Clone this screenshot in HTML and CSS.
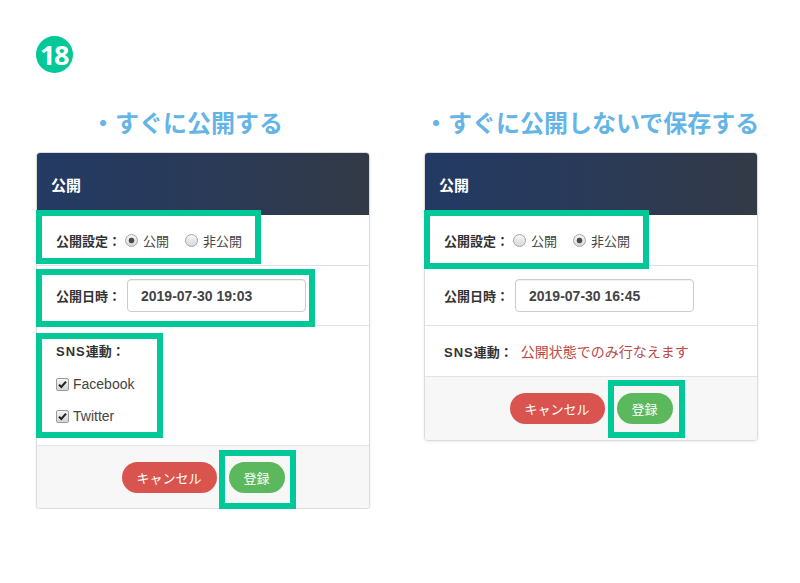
FILE: index.html
```html
<!DOCTYPE html>
<html lang="ja">
<head>
<meta charset="utf-8">
<title>公開設定</title>
<link rel="stylesheet" href="styles.css">
</head>
<body>
<div class="page">
  <div class="badge">18</div>
  <div class="columns">
    <section class="col">
      <h2 class="heading heading--left">・すぐに公開する</h2>
      <div class="card">
        <div class="card-header">公開</div>
        <div class="row row-radio">
          <span class="label">公開設定：</span>
          <span class="opt"><span class="radio radio--on"></span>公開</span>
          <span class="opt opt--second"><span class="radio"></span>非公開</span>
        </div>
        <div class="row row-date">
          <span class="label">公開日時：</span>
          <span class="date-input">2019-07-30 19:03</span>
        </div>
        <div class="row-sns-list">
          <div class="sns-title"><span class="wide">SNS</span>連動：</div>
          <div class="check-line"><span class="check"><svg width="11" height="11" viewBox="0 0 11 11"><path d="M2 5.6 L4.3 8 L9 2.6" fill="none" stroke="#222" stroke-width="2"/></svg></span>Facebook</div>
          <div class="check-line"><span class="check"><svg width="11" height="11" viewBox="0 0 11 11"><path d="M2 5.6 L4.3 8 L9 2.6" fill="none" stroke="#222" stroke-width="2"/></svg></span>Twitter</div>
        </div>
        <div class="card-footer">
          <span class="btn btn-cancel">キャンセル</span>
          <span class="btn btn-register">登録</span>
        </div>
        <div class="mark mark-l1"></div>
        <div class="mark mark-l2"></div>
        <div class="mark mark-l3"></div>
        <div class="mark mark-l4"></div>
      </div>
    </section>
    <section class="col">
      <h2 class="heading">・すぐに公開しないで保存する</h2>
      <div class="card">
        <div class="card-header">公開</div>
        <div class="row row-radio">
          <span class="label">公開設定：</span>
          <span class="opt"><span class="radio"></span>公開</span>
          <span class="opt opt--second"><span class="radio radio--on"></span>非公開</span>
        </div>
        <div class="row row-date">
          <span class="label">公開日時：</span>
          <span class="date-input">2019-07-30 16:45</span>
        </div>
        <div class="row row-sns-note">
          <span class="label"><span class="wide">SNS</span>連動：</span>
          <span class="note">公開状態でのみ行なえます</span>
        </div>
        <div class="card-footer card-footer--tall">
          <span class="btn btn-cancel">キャンセル</span>
          <span class="btn btn-register">登録</span>
        </div>
        <div class="mark mark-r1"></div>
        <div class="mark mark-r2"></div>
      </div>
    </section>
  </div>
</div>
</body>
</html>
```

FILE: styles.css
```css
* { box-sizing: border-box; }

body {
  margin: 0;
  background: #ffffff;
  font-family: "Liberation Sans", "Noto Sans CJK JP", sans-serif;
  color: #333;
}

.page {
  padding: 36px 0 0 36px;
}

.badge {
  width: 37px;
  height: 37px;
  border-radius: 50%;
  background: #00c896;
  color: #fff;
  font: 700 27px/37px "Open Sans", sans-serif;
  text-align: center;
  letter-spacing: -1.5px;
  text-indent: -1px;
}

.columns {
  display: flex;
  gap: 54px;
  margin-top: 33px;
  align-items: flex-start;
}

.col {
  width: 334px;
}

.heading {
  margin: 0 0 14px;
  font: 700 24px/32px "Noto Sans CJK JP", sans-serif;
  color: #64b5e6;
  white-space: nowrap;
}

.heading--left {
  padding-left: 55px;
}

.card {
  position: relative;
  border: 1px solid #dcdcdc;
  border-radius: 4px;
  background: #fff;
  box-shadow: 0 1px 3px rgba(0, 0, 0, 0.08);
}

.card-header {
  height: 62px;
  display: flex;
  align-items: center;
  padding-left: 14px;
  background: linear-gradient(90deg, #233a64 0%, #2a3a58 50%, #333a47 100%);
  color: #fff;
  font-weight: 700;
  font-size: 15px;
  border-radius: 3px 3px 0 0;
}

.row {
  display: flex;
  align-items: center;
  padding: 0 19px;
  border-bottom: 1px solid #e3e3e3;
  font-size: 13px;
}

.row-radio { height: 51px; }
.row-date { height: 60px; }
.row-sns-note { height: 51px; }

.label {
  font-weight: 700;
  color: #333;
  font-size: 13px;
}

.wide {
  letter-spacing: 1px;
}

.opt {
  display: inline-flex;
  align-items: center;
  gap: 5px;
  margin-left: 4px;
  color: #444;
  font-size: 13px;
}

.opt--second {
  margin-left: 16px;
}

.radio {
  width: 13px;
  height: 13px;
  border-radius: 50%;
  border: 1px solid #a6a6a6;
  background: linear-gradient(#f6f6f6, #d9d9d9);
}

.radio--on {
  background: radial-gradient(circle, #4a4a4a 0 2.5px, transparent 3.2px), linear-gradient(#f6f6f6, #d9d9d9);
}

.date-input {
  display: flex;
  align-items: center;
  margin-left: 6px;
  width: 179px;
  height: 33px;
  padding: 0 13px;
  border: 1px solid #cccccc;
  border-radius: 4px;
  font: 700 14px "Liberation Sans", sans-serif;
  color: #444;
  box-shadow: inset 0 1px 1px rgba(0, 0, 0, 0.06);
}

.row-sns-list {
  padding: 10px 19px 13px;
  border-bottom: 1px solid #e3e3e3;
}

.sns-title {
  line-height: 32px;
  font-weight: 700;
  font-size: 13px;
}

.check-line {
  display: flex;
  align-items: center;
  gap: 4px;
  height: 32px;
  font-size: 14px;
  color: #444;
}

.check {
  width: 13px;
  height: 13px;
  border: 1px solid #9a9a9a;
  border-radius: 2px;
  background: linear-gradient(#f4f4f4, #d6d6d6);
  display: flex;
  align-items: center;
  justify-content: center;
}

.note {
  margin-left: 8px;
  color: #b94a48;
  font-size: 14px;
}

.card-footer {
  display: flex;
  justify-content: center;
  gap: 12px;
  padding: 16px 0 15px;
  background: #f7f7f7;
  border-radius: 0 0 3px 3px;
}

.card-footer--tall {
  padding-bottom: 16px;
}

.btn {
  display: flex;
  align-items: center;
  justify-content: center;
  height: 31px;
  border-radius: 16px;
  color: #fff;
  font-size: 13px;
}

.btn-cancel {
  width: 95px;
  background: #d9534f;
}

.btn-register {
  width: 56px;
  background: #5cb85c;
}

.mark {
  position: absolute;
  border: 6px solid #00c896;
  pointer-events: none;
}

.mark-l1 { left: -1px; top: 57px; width: 225px; height: 54px; }
.mark-l2 { left: -1px; top: 116px; width: 279px; height: 58px; }
.mark-l3 { left: -1px; top: 180px; width: 127px; height: 105px; }
.mark-l4 { left: 182px; top: 297px; width: 77px; height: 59px; }
.mark-r1 { left: -1px; top: 57px; width: 225px; height: 59px; }
.mark-r2 { left: 183px; top: 227px; width: 77px; height: 58px; }
```
